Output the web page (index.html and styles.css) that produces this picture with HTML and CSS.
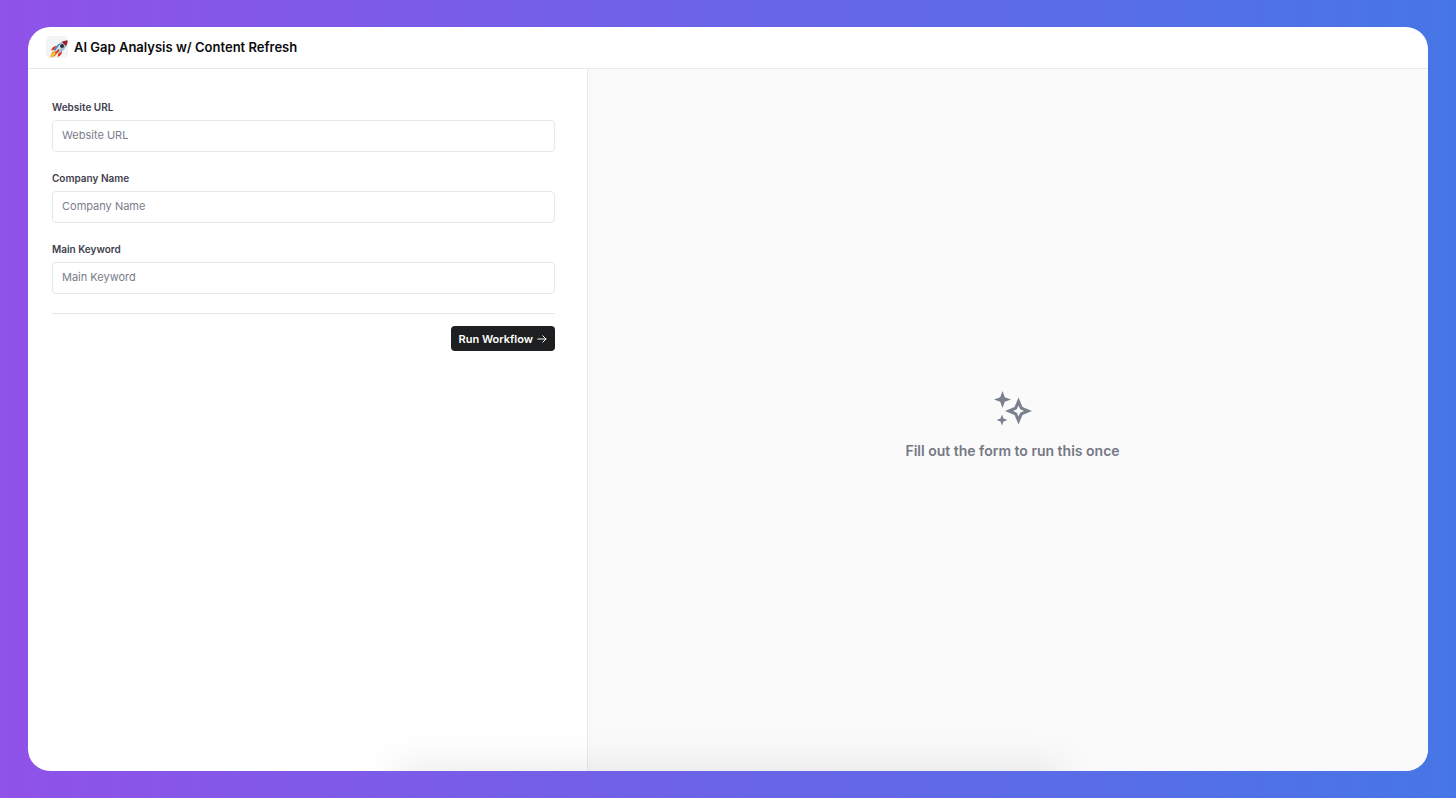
FILE: index.html
```html
<!DOCTYPE html>
<html lang="en">

<head>
<meta charset="UTF-8">
<meta name="viewport" content="width=device-width, initial-scale=1">
<title>AI Gap Analysis w/ Content Refresh</title>
<link rel="stylesheet" href="styles.css">
</head>

<body>
<div class="app">
  <header class="header">
    <span class="app-icon">
      <svg viewBox="0 0 36 36" width="18" height="18" aria-hidden="true">
        <path fill="#f9b233" d="M8 21 C3 24 1 29 1 35 C7 35 12 32 14 27 Z"/>
        <path fill="#e0301e" d="M15 12 C9 11 4 15 2 21 L11 19 Z"/>
        <path fill="#e0301e" d="M24 21 C25 27 21 32 15 34 L17 25 Z"/>
        <path fill="#a9bccb" d="M35 1 C24 1 15 7 8 20 L16 28 C29 21 35 12 35 1 Z"/>
        <path fill="#4289c9" d="M14 11 L8 20 L12 24 L23 13 L19 7 Z"/>
        <path fill="#d9e3ea" d="M21 7 L10 22 L13 25 L27 11 Z"/>
        <path fill="#a41d20" d="M35 1 C31 1 27 2 24 4 L32 12 C34 9 35 5 35 1 Z"/>
        <circle cx="24" cy="12" r="4" fill="#26323d"/>
        <path fill="#e0301e" d="M17 18 L19 20 L9 32 L6 29 Z"/>
        <path fill="#fbd34b" d="M8 24 L12 28 L4 33 Z"/>
      </svg>
    </span>
    <h1 class="title">AI Gap Analysis w/ Content Refresh</h1>
  </header>

  <main class="main">
    <form class="form">
      <div class="field">
        <label for="website-url">Website URL</label>
        <input id="website-url" type="text" placeholder="Website URL">
      </div>
      <div class="field">
        <label for="company-name">Company Name</label>
        <input id="company-name" type="text" placeholder="Company Name">
      </div>
      <div class="field">
        <label for="main-keyword">Main Keyword</label>
        <input id="main-keyword" type="text" placeholder="Main Keyword">
      </div>
      <div class="actions">
        <button class="run" type="button">
          Run Workflow
          <svg viewBox="0 0 10 10" width="10" height="10" aria-hidden="true">
            <path d="M0.8 5 H9 M5.8 1.8 L9 5 L5.8 8.2" fill="none" stroke="currentColor" stroke-linecap="round" stroke-linejoin="round"/>
          </svg>
        </button>
      </div>
    </form>

    <section class="result">
      <svg class="sparkles" viewBox="0 0 38 36" width="38" height="36" aria-hidden="true">
        <path d="M8.500 0 L10.800 6.200 L17 8.500 L10.800 10.800 L8.500 17 L6.200 10.800 L0 8.500 L6.200 6.200 Z"/>
        <path d="M8 23.500 L9.500 27.500 L13.500 29 L9.500 30.500 L8 34.500 L6.500 30.500 L2.500 29 L6.500 27.500 Z"/>
        <path fill-rule="evenodd" d="M24.500 6.500 L28.500 16 L38 20 L28.500 24 L24.500 33.500 L20.500 24 L11 20 L20.500 16 Z M24.500 14.500 L22.800 18.300 L19 20 L22.800 21.700 L24.500 25.500 L26.200 21.700 L30 20 L26.200 18.300 Z"/>
      </svg>
      <p class="hint">Fill out the form to run this once</p>
    </section>
  </main>
  <div class="shade"></div>
</div>
</body>

</html>
```

FILE: styles.css
```css
* {
  box-sizing: border-box;
}

body {
  margin: 0;
  min-height: 100vh;
  padding: 27px 28px;
  display: flex;
  background: linear-gradient(to right, #9052e8, #4676e6);
  font-family: Inter, "Liberation Sans", sans-serif;
}

.app {
  position: relative;
  flex: 1;
  display: flex;
  flex-direction: column;
  overflow: hidden;
  background: #fff;
  border-radius: 22px;
}

.header {
  display: flex;
  align-items: center;
  gap: 6px;
  height: 42px;
  padding: 0 18px 2px;
  border-bottom: 1px solid #e8e9eb;
}

.app-icon {
  display: flex;
  align-items: flex-end;
  justify-content: flex-end;
  width: 22px;
  height: 22px;
  border-radius: 4px;
  background: #f3f4f6;
}

.title {
  margin: 0;
  font-size: 13px;
  line-height: 18px;
  font-weight: 600;
  color: #0c0c0e;
}

.main {
  flex: 1;
  display: flex;
}

.form {
  width: 40%;
  padding: 31px 32px 24px 24px;
  border-right: 1px solid #e8e9eb;
}

.field {
  display: flex;
  flex-direction: column;
  gap: 6px;
  margin-bottom: 19px;
}

.field label {
  font-size: 10px;
  line-height: 14px;
  font-weight: 600;
  color: #3f404d;
}

.field input {
  height: 32px;
  padding: 0 9px 2px;
  border: 1px solid #e5e7eb;
  border-radius: 4px;
  background: #fff;
  font: inherit;
  font-size: 11px;
  color: #3f404d;
}

.field input::placeholder {
  color: #7a7d8a;
}

.actions {
  display: flex;
  justify-content: flex-end;
  padding-top: 12px;
  border-top: 1px solid #e5e7eb;
}

.run {
  display: flex;
  align-items: center;
  gap: 4px;
  height: 25px;
  padding: 0 8px;
  border: 0;
  border-radius: 4px;
  background: #1e1f20;
  color: #fff;
  font: inherit;
  font-size: 11px;
  font-weight: 600;
}

.result {
  flex: 1;
  display: flex;
  flex-direction: column;
  align-items: center;
  justify-content: center;
  gap: 14px;
  padding: 12px 0 0 9px;
  background: #fafafa;
}

.sparkles {
  fill: #7a808e;
}

.hint {
  margin: 0;
  font-size: 14px;
  line-height: 20px;
  font-weight: 600;
  color: #757884;
}

/* soft shadow rising from the bottom edge */
.shade {
  position: absolute;
  left: 26%;
  right: 26%;
  bottom: -24px;
  height: 24px;
  border-radius: 12px;
  box-shadow: 0 0 40px rgba(0, 0, 0, 0.13);
}
```
